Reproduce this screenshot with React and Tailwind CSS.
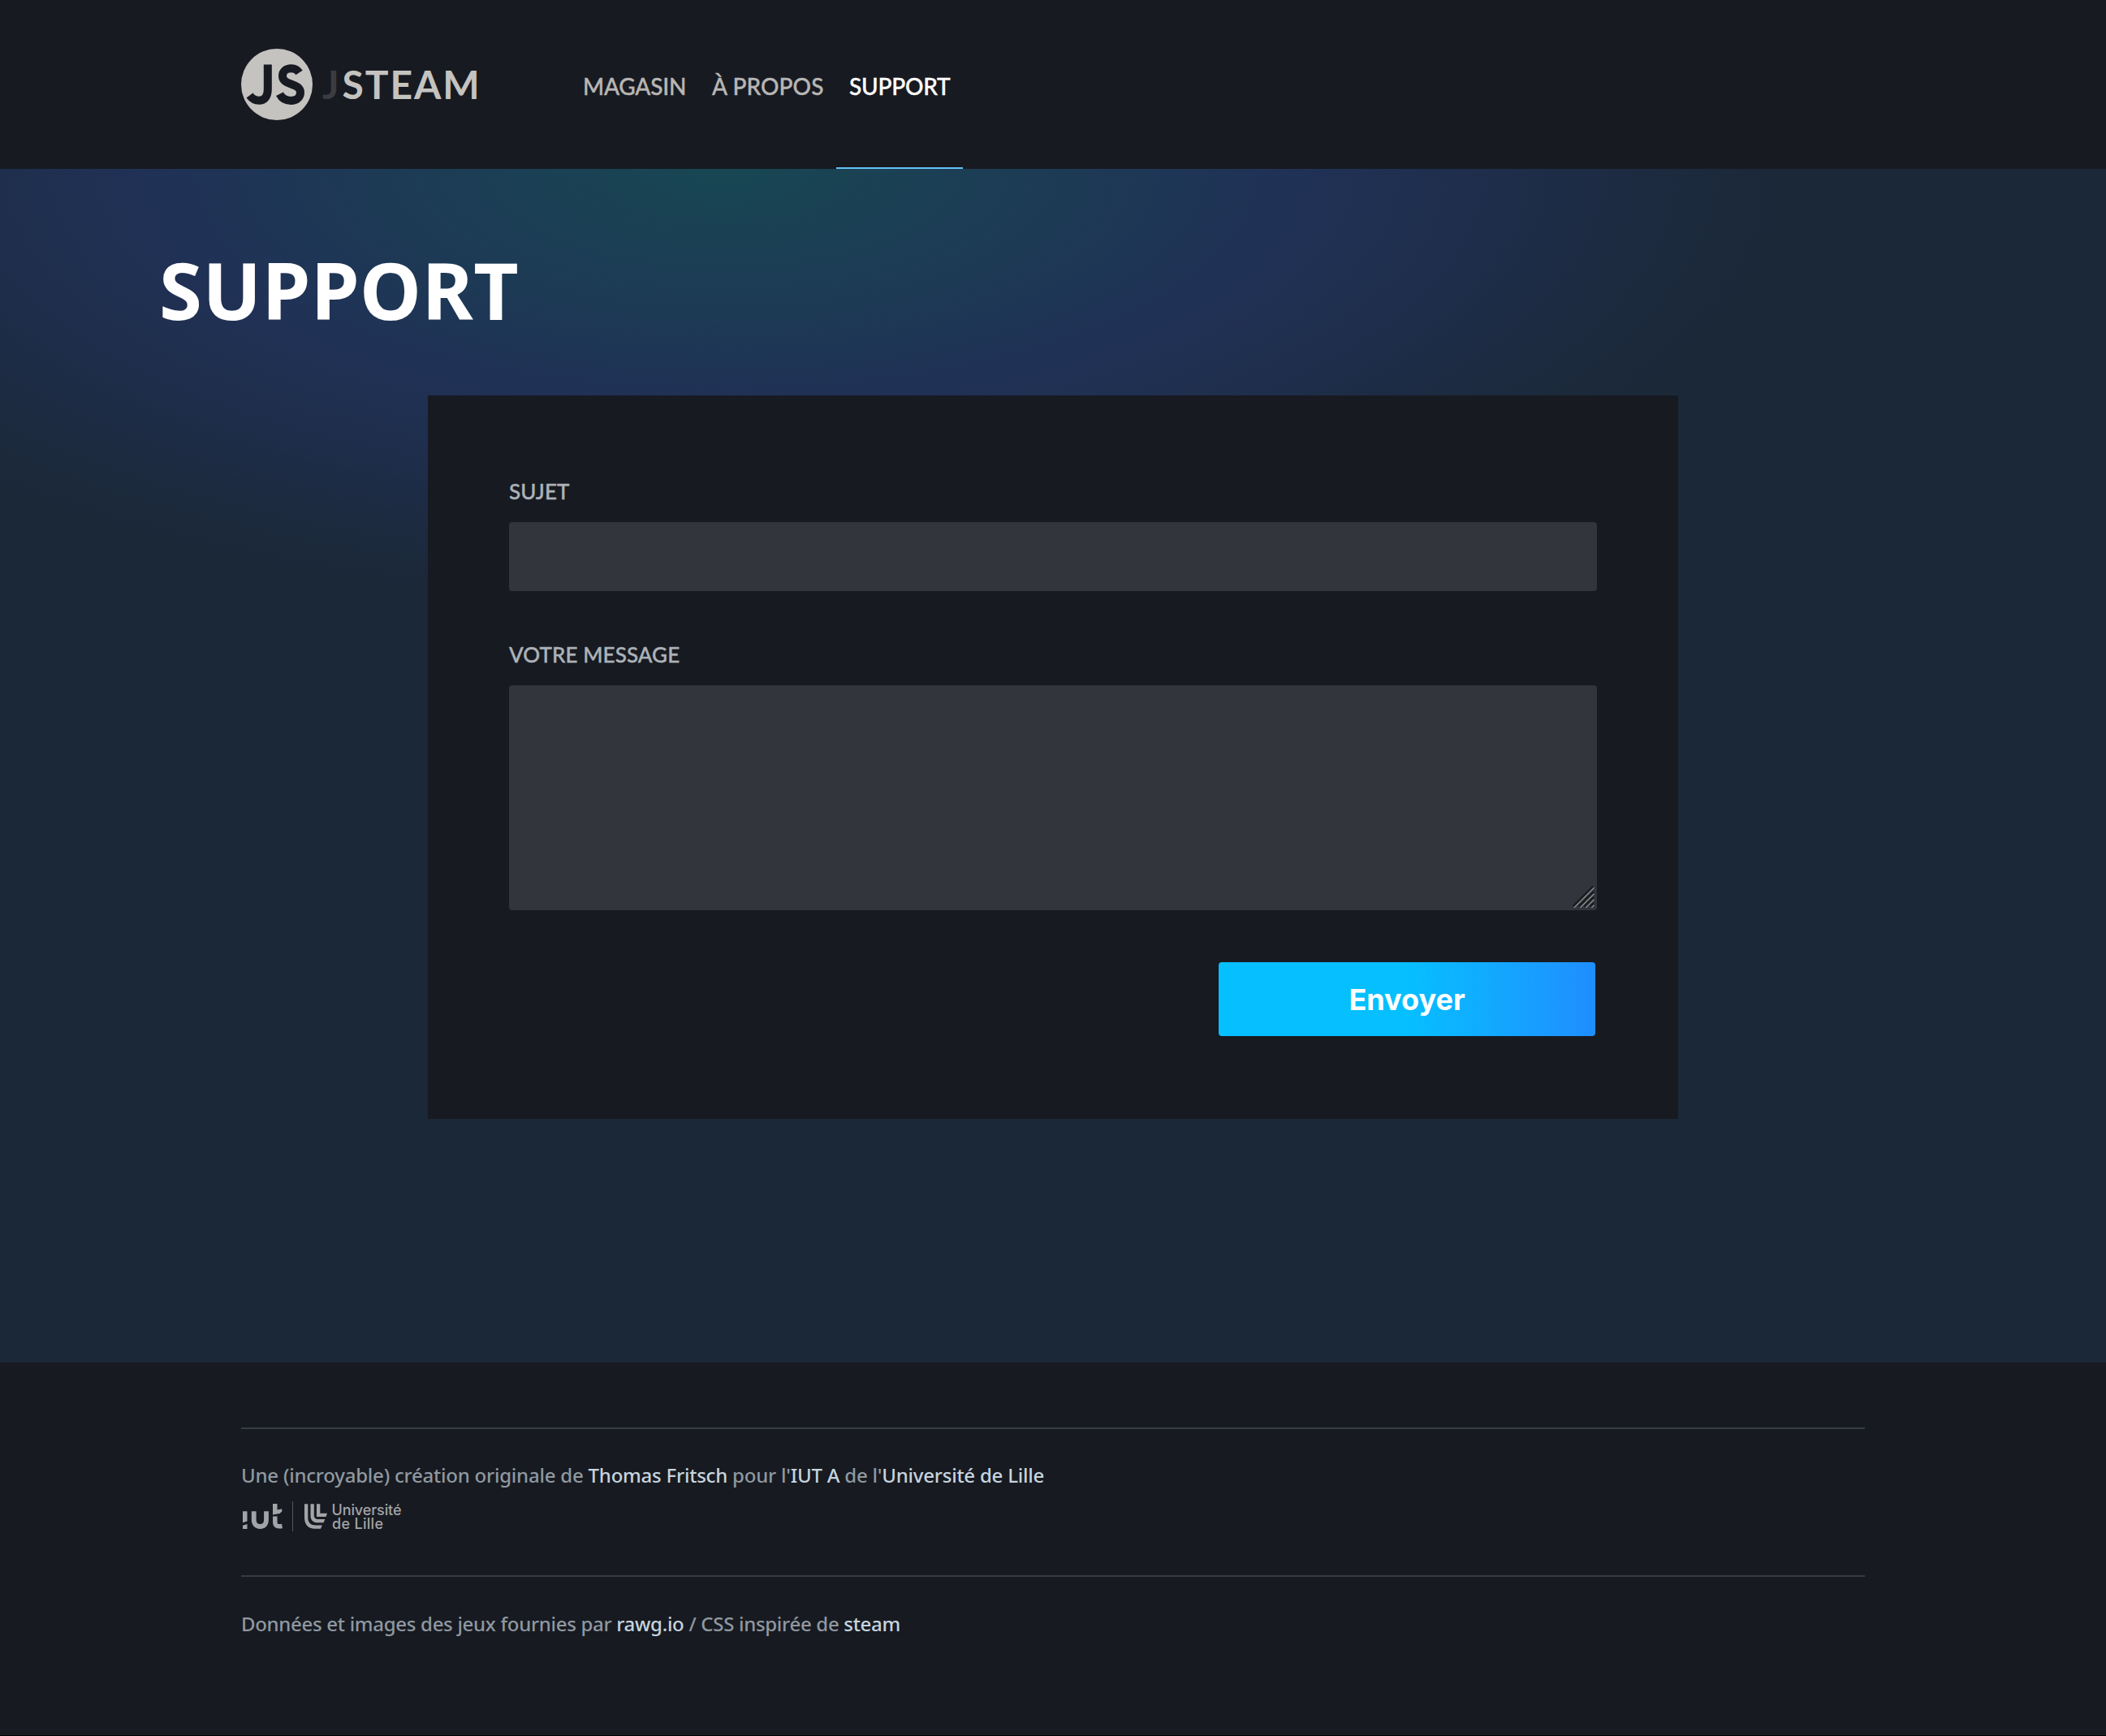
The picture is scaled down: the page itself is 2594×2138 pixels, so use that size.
const family = "font-['Noto_Sans','Open_Sans',sans-serif]";

function Logo() {
  return (
    <svg width="300" height="88" viewBox="0 0 300 88" className="block font-['Lato',sans-serif]">
      <circle cx="44" cy="44" r="44" fill="#c5c3c0" />
      <g fill="none" stroke="#171a21" strokeWidth="10">
        <path d="M32.800 19.500V50C32.800 59 28.500 63.800 22 63.800C17 63.800 13.500 61.500 10.500 57.500" />
        <path d="M71.500 29.500C69.500 26.300 66 24.300 61.800 24.300C55.300 24.300 51 28 51 33.500C51 46 73 41.500 73 54C73 60.200 67.800 63.900 61.300 63.900C54.500 63.900 50 60.800 47.500 55.800" />
      </g>
      <text x="100" y="62" fontSize="48" fontWeight="700" fill="#3c3c40">J</text>
      <text x="124.500" y="62" fontSize="48" fontWeight="700" fill="#c5c3c0" textLength="169">STEAM</text>
    </svg>
  );
}

function UniversityLogo() {
  return (
    <svg width="200" height="44" viewBox="0 0 200 44" className="block font-['Inter',sans-serif]">
      <g fill="#a3a4a8">
        <path d="M2 14.300H7.500V26.500L2 28.300ZM2 31.800L7.500 30V36H2Z" />
        <path d="M39 5H44.500V12.500L50.300 11.200V14.500L47.500 17L39 18.500Z" />
      </g>
      <g fill="none" stroke="#a3a4a8">
        <path strokeWidth="5.800" d="M15.700 14.300V24.500C15.700 30 18.500 33 23.400 33S31 30 31 24.500V14.300" />
        <path strokeWidth="5.500" d="M41.800 20.500V27.500C41.800 32 44.500 33.600 50.500 32.500" />
        <path strokeWidth="1" stroke="#55575c" d="M63.500 2V39" />
      </g>
      <g fill="#a3a4a8">
        <path d="M78 5.300H82.300V22C82.300 28.500 86 31.500 92 31.500H99.800L98 35.800H91C82.500 35.800 78 30.500 78 22Z" />
        <path d="M85.500 5.300H89.800V19C89.800 22.500 91.500 24 95 24H103.300L101.500 28.300H94.500C88.500 28.300 85.500 25 85.500 19.500Z" />
        <path d="M93 5.300H97.300V16.800H106L104.500 21H93Z" />
      </g>
      <text x="111.500" y="18.800" fontSize="18" fill="#a3a4a8" textLength="86">Université</text>
      <text x="112" y="36" fontSize="18" fill="#a3a4a8" textLength="63">de Lille</text>
    </svg>
  );
}

function ResizeGrip() {
  return (
    <svg width="27" height="27" viewBox="0 0 27 27" className="absolute right-[3px] bottom-[3px]" fill="none">
      <path
        stroke="#1b1c20"
        strokeWidth="2.500"
        d="M0.500 25.300L25 0.800M7.700 25.500L26 7.200M14.700 25.500L26 14.200M21.700 25.500L26 21.200"
      />
      <path
        stroke="#8e8f91"
        strokeWidth="1.300"
        d="M1.800 27L26.500 2.300M9.200 27L26.500 9.700M16.200 27L26.500 16.700M23.200 27L26.500 23.700"
      />
    </svg>
  );
}

function Header() {
  return (
    <header className="flex h-[208px] bg-[#171a21] pl-[297px]">
      <div className="w-[405px] pt-[60px]">
        <Logo />
      </div>
      <nav className="flex font-['Lato','Noto_Sans',sans-serif] text-[28px] leading-[38px] font-medium tracking-[-0.2px] text-[#b8b6b4] [-webkit-text-stroke:0.4px]">
        <a className="w-[158px] pt-[87px] pl-4 whitespace-nowrap">MAGASIN</a>
        <a className="w-[170px] pt-[87px] pl-[17px] tracking-[0.1px] whitespace-nowrap">À PROPOS</a>
        <a className="w-[156px] border-b-2 border-[#66c0f4] pt-[87px] pl-4 whitespace-nowrap text-white">SUPPORT</a>
      </nav>
    </header>
  );
}

function Footer() {
  return (
    <footer className="h-[460px] border-b border-black bg-[#171a21] px-[297px] pt-20 text-[24px] leading-[32px] font-medium tracking-[-0.22px] text-[#8f98a0]">
      <div className="h-[182px] border-t-2 border-[#363c44] pt-[41px]">
        <p className="whitespace-nowrap">
          Une (incroyable) création originale de <a className="text-[#c6d4df]">Thomas Fritsch</a> pour l'
          <a className="text-[#c6d4df]">IUT A</a> de l'<a className="text-[#c6d4df]">Université de Lille</a>
        </p>
        <div className="pt-[14px] tracking-normal">
          <UniversityLogo />
        </div>
      </div>
      <p className="border-t-2 border-[#363c44] pt-[42px] tracking-[-0.3px] whitespace-nowrap">
        Données et images des jeux fournies par <a className="text-[#c6d4df]">rawg.io</a> / CSS inspirée de{" "}
        <a className="text-[#c6d4df]">steam</a>
      </p>
    </footer>
  );
}

export default function App() {
  return (
    <div className={`flex h-[2138px] w-[2594px] flex-col ${family}`}>
      <Header />
      <main className="h-[1470px] bg-[#1b2838] bg-[radial-gradient(1297px_535px_at_893px_0px,#184753_0%,#203156_55%,#1b2838_100%)] px-[200px] pt-[89px]">
        <h1 className="-ml-1 text-[96px] leading-[120px] font-bold tracking-[0.6px] text-white">SUPPORT</h1>
        <form className="mx-auto mt-[70px] h-[891px] w-[1540px] bg-[#171a21] px-[100px] pt-[100px] text-[26px] leading-[38px] font-medium text-[#acb2b8]">
          <label className="-mt-px block h-[57px] font-['Lato','Noto_Sans',sans-serif] tracking-[0.1px] [-webkit-text-stroke:0.4px]">SUJET</label>
          <input className="block h-[85px] w-full rounded-[4px] bg-[#32353c] outline-none" />
          <label className="mt-[59px] block h-[57px] font-['Lato','Noto_Sans',sans-serif] tracking-[0.1px] [-webkit-text-stroke:0.4px]">VOTRE MESSAGE</label>
          <div className="relative">
            <textarea className="block h-[277px] w-full resize-none rounded-[4px] bg-[#32353c] outline-none" />
            <ResizeGrip />
          </div>
          <button
            type="button"
            className="mt-16 mr-[2px] ml-auto block h-[91px] w-[464px] rounded-[4px] bg-linear-to-r from-[#06bfff] from-50% to-[#1f8dff] font-['Inter',sans-serif] text-[36px] font-bold text-white"
          >
            Envoyer
          </button>
        </form>
      </main>
      <Footer />
    </div>
  );
}
